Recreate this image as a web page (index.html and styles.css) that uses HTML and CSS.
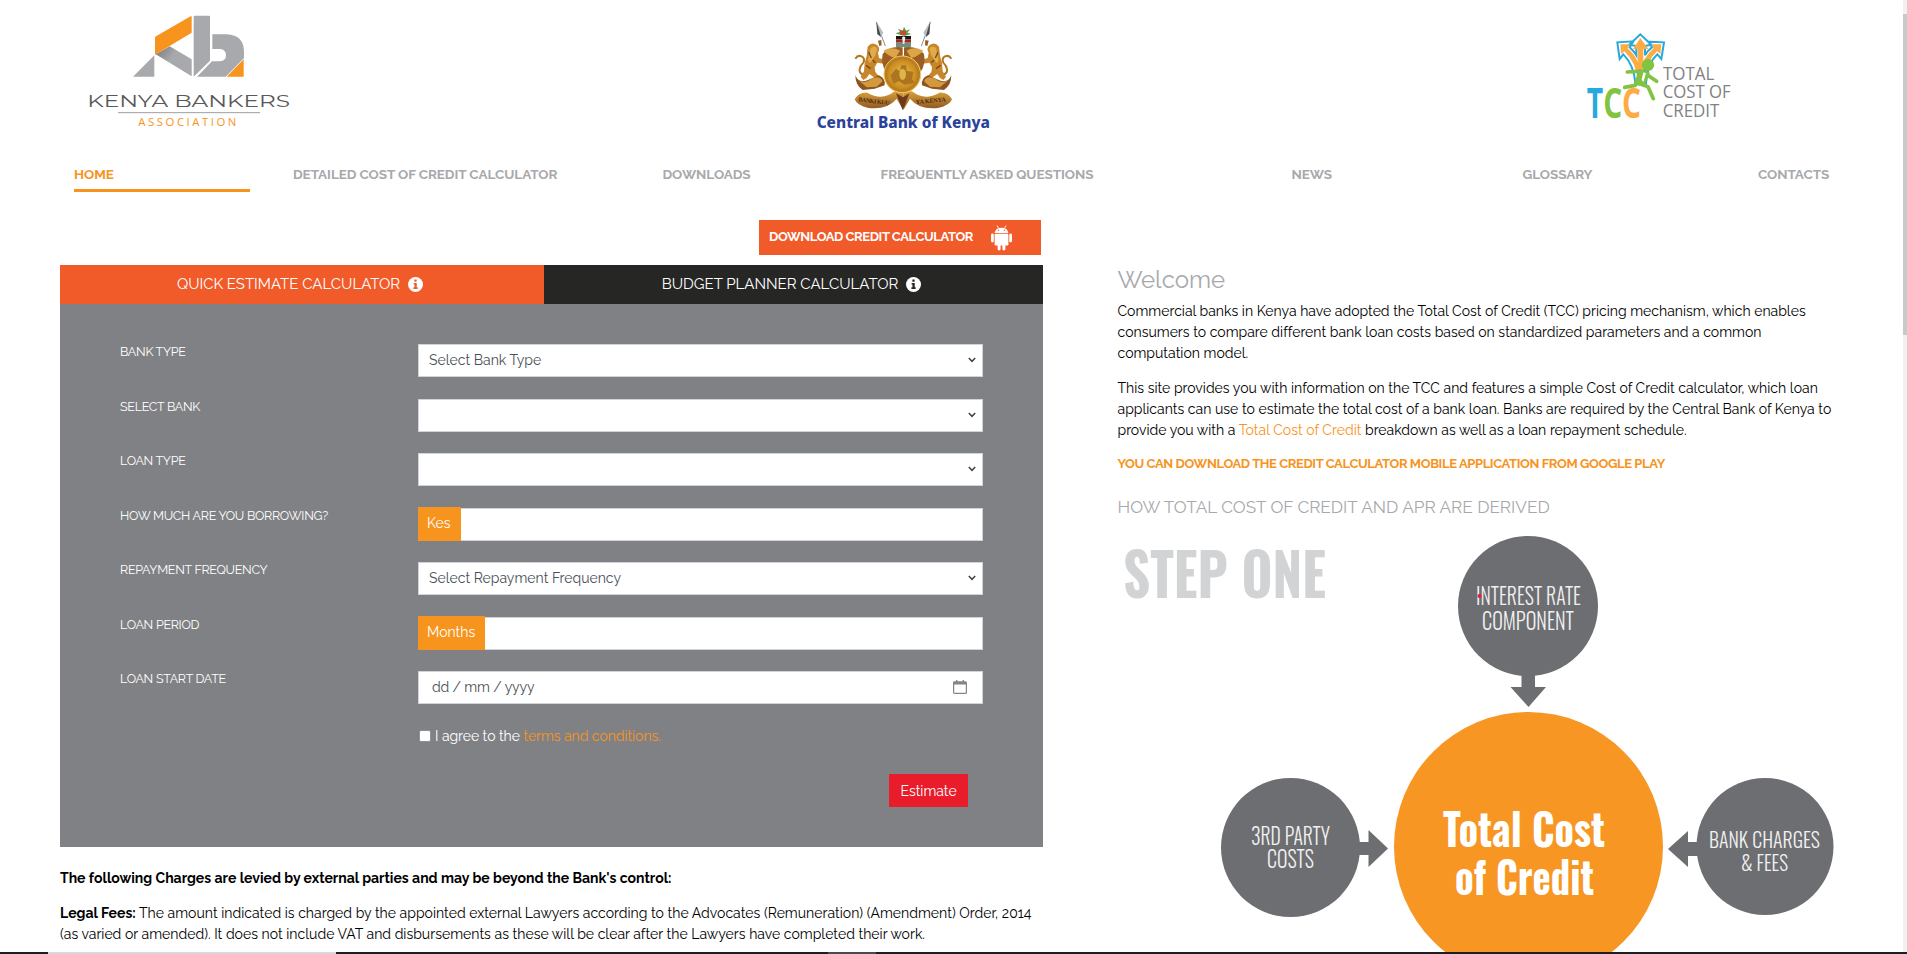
FILE: index.html
```html
<!DOCTYPE html>
<html lang="en">
<head>
<meta charset="utf-8">
<title>Total Cost of Credit</title>
<link rel="stylesheet" href="styles.css">
</head>
<body>
<header class="logos">
  <svg class="logo-kba" viewBox="0 0 780 420" width="260" height="140">
    <defs><linearGradient id="fold" x1="0" y1="0" x2="1" y2="0.6"><stop offset="0" stop-color="#77787b"/><stop offset=".5" stop-color="#a7a9ac"/></linearGradient></defs>
    <path fill="url(#fold)" d="M287 163L329 139L395 178V229Z"/>
    <path fill="#f7941e" d="M285 114Q285 111 288 109L392 49Q395 47 395 51V98L285 164Z"/>
    <path fill="#a7a9ac" d="M219 230L283 166V230Z"/>
    <path fill="#a7a9ac" d="M401 51Q401 47 405 47H446Q450 47 450 51V182L401 230Z"/>
    <path fill="#a7a9ac" d="M457 103H500Q552 105 552 157V174L497 230H411L456 184H480Q498 182 498 165Q497 148 480 147H457Z"/>
    <path fill="#f7941e" d="M551 178V230H500Z"/>
    <text x="82" y="320" class="kba-name" textLength="608" lengthAdjust="spacingAndGlyphs">KENYA BANKERS</text>
    <path d="M174 338H600" stroke="#8a8c8f" stroke-width="2.5"/>
    <text x="235" y="377" class="kba-sub" textLength="294">ASSOCIATION</text>
  </svg>
  <svg class="logo-cbk" viewBox="0 0 630 390" width="210" height="130">
    <defs>
      <radialGradient id="coin"><stop offset="0" stop-color="#e9bf4a"/><stop offset=".65" stop-color="#cf9426"/><stop offset="1" stop-color="#b97a1c"/></radialGradient>
      <linearGradient id="rib" x1="0" y1="0" x2="0" y2="1"><stop offset="0" stop-color="#d9a13a"/><stop offset="1" stop-color="#8a5420"/></linearGradient>
      <g id="half">
        <path d="M229 36L256 108" stroke="#8b8f92" stroke-width="3"/>
        <path fill="#b9bfc2" d="M229 34L250 68L243 81L232 72Z"/><path fill="#444b50" d="M229 34L240 70L243 81L232 72Z"/>
        <path fill="#9b5c22" d="M234 92L244 90L245 106L238 108Z"/>
        <path d="M196 196C168 190 180 168 190 158C198 140 176 130 166 146" fill="none" stroke="#b5761f" stroke-width="6"/>
        <path fill="#c8862a" d="M203 110Q216 94 232 106Q242 116 234 128L237 144L262 152L256 162L232 158L224 172L226 186L236 198L222 202L208 192L200 204L190 210L182 200L192 184L194 158L200 138Z"/>
        <path fill="#e0ab4c" d="M212 114Q224 104 232 116L226 136L210 160L204 150Z"/>
        <path d="M206 126L214 144M198 166L212 176M218 150L226 158" stroke="#7c4718" stroke-width="4"/>
        <path fill="#8d5320" d="M166 196Q176 222 204 210L236 196Q258 206 254 226L224 236L188 240Q166 226 166 196Z"/>
        <path fill="#d29a3c" d="M172 208Q192 226 214 206Q240 194 248 214L230 230L200 232Z"/>
        <path fill="#9a5e22" d="M248 132Q268 106 308 112V150Q268 136 258 186Q242 160 248 132Z"/>
        <path fill="#dca648" d="M250 122Q276 108 300 122L286 144Q264 138 250 122Z"/>
        <path fill="url(#rib)" d="M164 268Q176 246 202 248Q246 274 284 244L310 244V300L290 266Q262 300 206 294Q170 286 164 268Z"/>
      </g>
    </defs>
    <use href="#half"/><use href="#half" transform="matrix(-1 0 0 1 620 0)"/>
    <path fill="#5d9a46" d="M286 70L300 66L294 56L308 62L312 50L318 62L330 58L322 68L334 72L312 78Z"/><path fill="#d0452d" d="M300 62h18v12h-18z"/>
    <path fill="#161616" d="M288 78H333V88H288Z"/><path fill="#a52522" d="M288 88H333V98H288Z"/><path fill="#6c9183" d="M288 98H333V111H288Z"/><path fill="#eee" d="M306 82l5-3 5 3-3 20h-4z"/>
    <circle cx="307" cy="193" r="55" fill="url(#coin)" stroke="#f0ca63" stroke-width="3"/>
    <circle cx="307" cy="193" r="47" fill="none" stroke="#a46b1a" stroke-width="3" stroke-dasharray="3 4"/>
    <path fill="#ad7520" d="M272 196L288 176L300 184L304 166H318L320 182L340 186L336 208L344 218L314 224L296 214L280 222Z"/><ellipse cx="308" cy="193" rx="10" ry="17" fill="#dfb449"/>
    <path fill="#6d3a1c" d="M288 250L308 300L328 250L309 262Z"/>
    <g class="motto"><text x="176" y="274" transform="rotate(7 176 262)" textLength="94">BANKI KUU</text><text x="348" y="282" transform="rotate(-5 348 282)" textLength="90">YA KENYA</text></g>
    <text x="50" y="353" class="cbk-name" textLength="520" lengthAdjust="spacingAndGlyphs">Central Bank of Kenya</text>
  </svg>
  <svg class="logo-tcc" viewBox="0 0 540 330" width="180" height="110">
    <g stroke="#25a9e0" stroke-width="6" fill="#fff">
      <path d="M196 190Q192 135 160 103L149 117L142 67L190 64L179 82Q192 94 199 106V78L178 74L211 43L244 74L225 78V106Q232 92 246 82L235 65L282 67L274 117L262 103Q232 130 228 190Z"/>
    </g>
    <g fill="#fdac45"><path d="M203 164V87H189L211 54L235 87H220V164Z"/><path d="M202 178Q199 128 163 94L153 102L151 73L180 73L173 85Q204 112 211 150Q220 112 251 85L244 73L274 73L271 102L261 94Q226 128 219 178Z"/></g>
    <path fill="#25a9e0" d="M202 150H230V196H202Z"/>
    <path d="M172 156L214 153L196 196L164 202M216 154L242 172L260 184M206 190L234 200L250 236" fill="none" stroke="#82c341" stroke-width="11" stroke-linejoin="round" stroke-linecap="round"/>
    <path fill="#82c341" d="M208 148L240 158L222 200L192 192Z"/><path fill="#fff" d="M220 157l8 3-8 26-5-7z"/>
    <circle cx="234" cy="135" r="18.500" fill="#82c341"/>
    <g class="tcc"><text x="50" y="293" fill="#25a9e0" textLength="49" lengthAdjust="spacingAndGlyphs">T</text><text x="100" y="293" fill="#82c341" textLength="57" lengthAdjust="spacingAndGlyphs">C</text><text x="156" y="293" fill="#fdac45" textLength="57" lengthAdjust="spacingAndGlyphs">C</text></g>
    <g class="tcc-name"><text x="279" y="179" textLength="154" lengthAdjust="spacingAndGlyphs">TOTAL</text><text x="278" y="235" textLength="204" lengthAdjust="spacingAndGlyphs">COST OF</text><text x="278" y="290" textLength="170" lengthAdjust="spacingAndGlyphs">CREDIT</text></g>
  </svg>
</header>

<nav class="menu">
  <a class="menu-item active">HOME</a><a class="menu-item">DETAILED COST OF CREDIT CALCULATOR</a><a class="menu-item">DOWNLOADS</a><a class="menu-item">FREQUENTLY ASKED QUESTIONS</a><a class="menu-item">NEWS</a><a class="menu-item">GLOSSARY</a><a class="menu-item">CONTACTS</a>
</nav>

<main class="columns">
  <section class="left">
    <a class="download"><span>DOWNLOAD CREDIT CALCULATOR</span>
      <svg width="21" height="26" viewBox="0 0 21 26"><g fill="#fff"><path d="M3.600 8A7 6.200 0 0 1 17.400 8Z"/><rect x="3.600" y="8.800" width="13.800" height="11.700" rx="1.200"/><rect x="0" y="8.500" width="2.800" height="9" rx="1.400"/><rect x="18.200" y="8.500" width="2.800" height="9" rx="1.400"/><rect x="6.600" y="17" width="3" height="8.400" rx="1.400"/><rect x="11.400" y="17" width="3" height="8.400" rx="1.400"/></g><path d="M6 .5L7.500 3.300M15 .5L13.500 3.300" stroke="#fff" stroke-width=".9"/><circle cx="7.500" cy="5.300" r=".7" fill="#f15a29"/><circle cx="13.500" cy="5.300" r=".7" fill="#f15a29"/></svg>
    </a>
    <div class="tabs">
      <a class="tab current">QUICK ESTIMATE CALCULATOR <svg class="info" viewBox="0 0 16 16"><circle cx="8" cy="8" r="8" fill="#fff"/><path d="M6.800 2.700H9.200V5H6.800ZM6 6.300H9.300V11H10.300V12.700H5.800V11H6.900V8H6Z" fill="#f15a29"/></svg></a>
      <a class="tab">BUDGET PLANNER CALCULATOR <svg class="info" viewBox="0 0 16 16"><circle cx="8" cy="8" r="8" fill="#fff"/><path d="M6.800 2.700H9.200V5H6.800ZM6 6.300H9.300V11H10.300V12.700H5.800V11H6.900V8H6Z" fill="#262625"/></svg></a>
    </div>
    <form class="panel">
      <div class="row"><label>BANK TYPE</label><div class="field">Select Bank Type<svg class="chev" viewBox="0 0 8 6"><path d="M.8 1L4 4.300L7.200 1"/></svg></div></div>
      <div class="row"><label>SELECT BANK</label><div class="field"><svg class="chev" viewBox="0 0 8 6"><path d="M.8 1L4 4.300L7.200 1"/></svg></div></div>
      <div class="row"><label>LOAN TYPE</label><div class="field"><svg class="chev" viewBox="0 0 8 6"><path d="M.8 1L4 4.300L7.200 1"/></svg></div></div>
      <div class="row"><label>HOW MUCH ARE YOU BORROWING?</label><div class="field addon"><span class="unit">Kes</span></div></div>
      <div class="row"><label>REPAYMENT FREQUENCY</label><div class="field">Select Repayment Frequency<svg class="chev" viewBox="0 0 8 6"><path d="M.8 1L4 4.300L7.200 1"/></svg></div></div>
      <div class="row"><label>LOAN PERIOD</label><div class="field addon"><span class="unit">Months</span></div></div>
      <div class="row"><label>LOAN START DATE</label><div class="field date">dd / mm / yyyy<svg class="cal" viewBox="0 0 14 14"><rect x=".6" y="2" width="12.800" height="11.400" rx="1" fill="none" stroke="#80868b" stroke-width="1.200"/><path d="M.5 1.500H13.500V4.600H.5ZM3 0h1.400v2H3zM9.600 0H11v2H9.600z" fill="#80868b"/></svg></div></div>
      <div class="agree"><span class="check"></span><span>I agree to the <a class="link">terms and conditions.</a></span></div>
      <button class="estimate" type="button">Estimate</button>
    </form>
    <div class="notes">
      <p><b>The following Charges are levied by external parties and may be beyond the Bank's control:</b></p>
      <p class="legal"><b>Legal Fees:</b> The amount indicated is charged by the appointed external Lawyers according to the Advocates (Remuneration) (Amendment) Order, 2014<br>(as varied or amended). It does not include VAT and disbursements as these will be clear after the Lawyers have completed their work.</p>
    </div>
  </section>

  <section class="right">
    <h1>Welcome</h1>
    <p>Commercial banks in Kenya have adopted the Total Cost of Credit (TCC) pricing mechanism, which enables<br>consumers to compare different bank loan costs based on standardized parameters and a common<br>computation model.</p>
    <p>This site provides you with information on the TCC and features a simple Cost of Credit calculator, which loan<br>applicants can use to estimate the total cost of a bank loan. Banks are required by the Central Bank of Kenya to<br>provide you with a <a class="link">Total Cost of Credit</a> breakdown as well as a loan repayment schedule.</p>
    <p class="promo">YOU CAN DOWNLOAD THE CREDIT CALCULATOR MOBILE APPLICATION FROM GOOGLE PLAY</p>
    <h2>HOW TOTAL COST OF CREDIT AND APR ARE DERIVED</h2>
    <svg class="diagram" viewBox="1118 530 725 424" width="725" height="424">
      <text x="1123" y="597.500" class="step" textLength="203" lengthAdjust="spacingAndGlyphs">STEP ONE</text>
      <g fill="#6d6e71">
        <circle cx="1528" cy="606" r="70"/><path d="M1521.500 670H1535V687H1546L1528.500 707L1510.500 687H1521.500Z"/>
        <circle cx="1290.500" cy="847.500" r="69.500"/><path d="M1355 842H1368.500V830L1388 848.500L1368.500 867V855H1355Z"/>
        <circle cx="1765" cy="846.500" r="68.500"/><path d="M1700 842H1688V831L1668 849L1688 867V856H1700Z"/>
      </g>
      <circle cx="1528.500" cy="846.500" r="134.500" fill="#f79623"/>
      <g class="node">
        <text x="1476" y="605" textLength="105" lengthAdjust="spacingAndGlyphs">INTEREST RATE</text>
        <text x="1482" y="630" textLength="92" lengthAdjust="spacingAndGlyphs">COMPONENT</text>
        <text x="1251" y="845" textLength="79" lengthAdjust="spacingAndGlyphs">3RD PARTY</text>
        <text x="1267" y="868" textLength="47" lengthAdjust="spacingAndGlyphs">COSTS</text>
      </g>
      <g class="node small">
        <text x="1709" y="848" textLength="111" lengthAdjust="spacingAndGlyphs">BANK CHARGES</text>
        <text x="1741" y="871" textLength="47" lengthAdjust="spacingAndGlyphs">&amp; FEES</text>
      </g>
      <circle cx="1479.500" cy="596" r="2" fill="#ed1c24"/>
      <g class="core">
        <text x="1443" y="846.500" textLength="162" lengthAdjust="spacingAndGlyphs">Total Cost</text>
        <text x="1455" y="895" textLength="139" lengthAdjust="spacingAndGlyphs">of Credit</text>
      </g>
    </svg>
  </section>
</main>

<div class="scrollbar"><div class="thumb"></div></div>
<div class="taskbar"><span class="task light"></span><span class="task mid"></span></div>
</body>
</html>
```
FILE: styles.css
```css
* { box-sizing: border-box; }
body {
  margin: 0;
  height: 954px;
  overflow: hidden;
  position: relative;
  background: #fff;
  color: #000;
  font: 14px/21px Raleway, Lato, sans-serif;
}
p, h1, h2 { margin: 0; font-weight: 400; white-space: nowrap; }

/* header logos */
.logos { display: flex; height: 152px; padding-left: 60px; }
.logo-cbk { margin: 10px 0 0 480px; }
.logo-tcc { margin: 20px 0 0 560px; }
.kba-name { font: 400 49px Montserrat, Inter, sans-serif; fill: #58595b; }
.kba-sub { font: 34px "Open Sans", sans-serif; fill: #f7941e; }
.motto { font: bold 18px "Liberation Serif", serif; fill: #4a2812; }
.cbk-name { font: 800 46px "Noto Sans", "Open Sans", sans-serif; fill: #2b429b; }
.tcc { font: 700 124px "Open Sans", sans-serif; }
.tcc-name { font: 54px "Open Sans", sans-serif; fill: #808285; }

/* main menu */
.menu {
  display: grid;
  grid-template-columns: 219px 369.500px 218px 411px 231px 235.500px 1fr;
  height: 68px;
  padding-left: 74px;
  font-size: 13.500px;
  font-weight: 700;
  letter-spacing: -.06px;
  color: #a7a9ac;
}
.menu-item { padding-top: 12px; white-space: nowrap; }
.menu-item.active { width: 176px; height: 40px; color: #f7941e; border-bottom: 3px solid #f7941e; }

.columns { display: grid; grid-template-columns: 983px 1fr; column-gap: 74.500px; padding-left: 60px; }

/* download button */
.download {
  display: flex;
  align-items: center;
  width: 282px;
  height: 35px;
  margin-left: 699px;
  padding: 0 29px 0 10px;
  justify-content: space-between;
  background: #f15a29;
  color: #fff;
  font-weight: 700;
  font-size: 13px;
  letter-spacing: -.42px;
  white-space: nowrap;
}
.download span { padding-bottom: 2px; }
.download svg { margin-top: 1px; }

/* calculator tabs */
.tabs { display: grid; grid-template-columns: 484px 1fr; height: 39px; margin-top: 10px; }
.tab {
  display: flex;
  align-items: center;
  justify-content: center;
  gap: 8px;
  padding-right: 4px;
  background: #262625;
  color: #fff;
  font-size: 15px;
}
.tab.current { background: #f15a29; }
.tab svg { width: 15px; height: 15px; margin-bottom: 1px; }

/* estimate form */
.panel { height: 543px; padding: 40px 60px 0; background: #808184; color: #fff; }
.row { display: grid; grid-template-columns: 298px 565px; height: 54.500px; }
label { font-size: 12.500px; line-height: 16.500px; letter-spacing: -.28px; }
.field {
  display: flex;
  align-items: center;
  justify-content: space-between;
  height: 33px;
  padding: 0 6px 1px 10px;
  background: #fff;
  border: 1px solid #ced4da;
  color: #495057;
}
.field.addon { padding: 0; }
.unit { margin: -1px; padding: 6px 10px 0 9px; height: 34px; background: #f7941e; color: #fff; }
.field.date { padding: 0 15px 1px 13px; letter-spacing: -.13px; }
.chev { width: 8px; height: 6px; margin-left: auto; }
.chev path { fill: none; stroke: #3c4248; stroke-width: 1.500; }
.cal { width: 14px; height: 14px; }
.agree { display: flex; align-items: center; gap: 4px; height: 21px; margin-left: 299px; letter-spacing: -.05px; }
.check { width: 12px; height: 12px; background: #fff; border: 1px solid #8f8f9d; border-radius: 2px; }
.link { color: #f7941e; }
.estimate {
  display: block;
  width: 79px;
  height: 33px;
  margin: 27.500px 0 0 769px;
  padding: 2px 0 0;
  border: 0;
  background: #e81c2b;
  color: #fff;
  font: 14px/21px Raleway, Lato, sans-serif;
}

.notes { display: grid; gap: 14px; padding-top: 21px; }
.legal { letter-spacing: .02px; }

/* welcome column */
.right { letter-spacing: .015px; }
.right h1 { margin: 43px 0 5px; color: #a7a9ac; font-size: 24px; line-height: 33px; }
.right p { margin-bottom: 14px; }
.right .promo { margin: -1px 0 24px; color: #f7941e; font-size: 13px; font-weight: 700; line-height: 19px; letter-spacing: -.39px; }
.right h2 { color: #a7a9ac; font-size: 17.150px; }
.diagram { display: block; margin-top: 12px; }
.step { font: 700 60px Oswald, Roboto, sans-serif; fill: #d1d3d4; }
.node { font: 300 24px Oswald, Roboto, sans-serif; fill: #f1f1f2; }
.node.small { font-size: 20px; }
.core { font: 700 44px Oswald, Roboto, sans-serif; fill: #fff; }

/* window edges */
.scrollbar { position: absolute; top: 0; right: 0; width: 4px; height: 952px; padding-top: 14px; background: #f1f1f1; }
.thumb { height: 321px; background: #c8c9ca; }
.taskbar { position: absolute; left: 0; bottom: 0; width: 100%; height: 2px; display: flex; background: #1d1e22; }
.task { height: 2px; }
.light { width: 288px; margin-left: 48px; background: #d9d9d9; }
.mid { width: 48px; margin-left: 492px; background: #4a4b4f; }
```
